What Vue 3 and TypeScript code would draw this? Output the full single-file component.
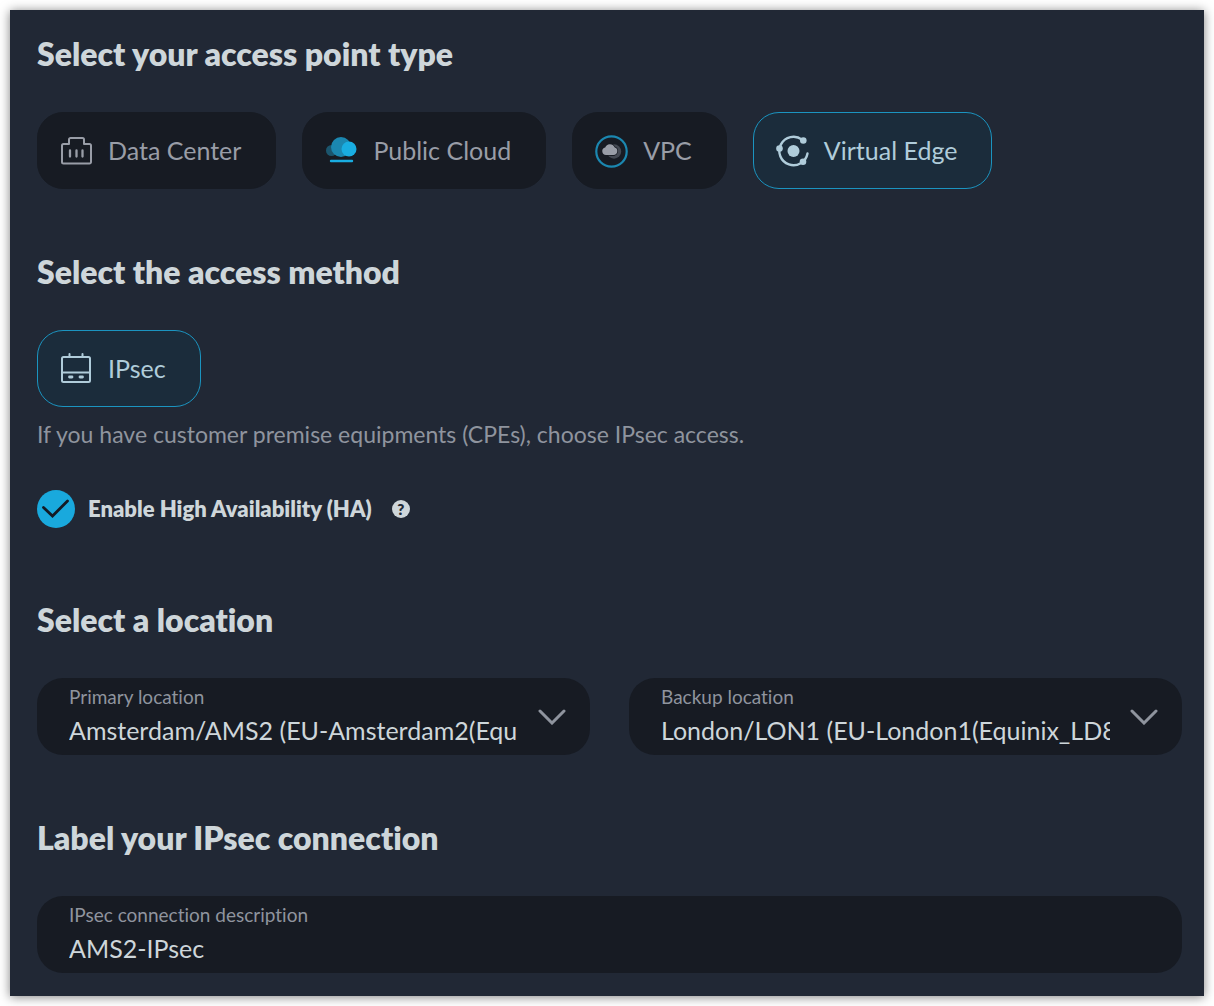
<script setup lang="ts">
import { ref } from 'vue'

type AccessIcon = 'data-center' | 'public-cloud' | 'vpc' | 'virtual-edge'

interface AccessPoint {
  id: AccessIcon
  label: string
}

const accessPoints: AccessPoint[] = [
  { id: 'data-center', label: 'Data Center' },
  { id: 'public-cloud', label: 'Public Cloud' },
  { id: 'vpc', label: 'VPC' },
  { id: 'virtual-edge', label: 'Virtual Edge' },
]

const accessPoint = ref<AccessIcon>('virtual-edge')
const highAvailability = ref(true)
const primary = ref('ams2')
const backup = ref('lon1')
const description = ref('AMS2-IPsec')
</script>

<template>
  <main class="panel">
    <section class="section">
      <h2>Select your access point type</h2>
      <div class="choices">
        <button
          v-for="point in accessPoints"
          :key="point.id"
          type="button"
          class="choice"
          :class="{ selected: accessPoint === point.id }"
          :aria-pressed="accessPoint === point.id"
          @click="accessPoint = point.id"
        >
          <svg v-if="point.id === 'data-center'" class="icon" viewBox="0 0 32 32" fill="none" stroke="currentColor" stroke-width="2" stroke-linecap="round" stroke-linejoin="round" aria-hidden="true">
            <path d="M9 9H3.500A1.500 1.500 0 0 0 2 10.500V27a1.500 1.500 0 0 0 1.500 1.500h26A1.500 1.500 0 0 0 31 27V10.500A1.500 1.500 0 0 0 29.500 9H24V4.500A1.500 1.500 0 0 0 22.500 3h-12A1.500 1.500 0 0 0 9 4.500z" />
            <path d="M10 15.500v6M16.500 15.500v6M22.500 15.500v6" stroke-width="2.300" />
          </svg>
          <svg v-else-if="point.id === 'public-cloud'" class="icon" viewBox="0 0 32 32" aria-hidden="true">
            <circle cx="6.500" cy="15.500" r="5.500" fill="#1b556d" />
            <circle cx="16" cy="12" r="10" fill="#1b87b0" />
            <circle cx="24" cy="14" r="7.500" fill="#19ade1" />
            <path d="M6 26h21" stroke="#19ade1" stroke-width="2.400" stroke-linecap="round" />
          </svg>
          <svg v-else-if="point.id === 'vpc'" class="icon" viewBox="0 0 32 32" aria-hidden="true">
            <circle cx="16.500" cy="16.500" r="15.200" fill="none" stroke="#1b87b0" stroke-width="2.200" />
            <circle cx="19" cy="16.500" r="7.200" fill="#444953" />
            <circle cx="17.500" cy="16.500" r="4.600" fill="#171b23" />
            <path d="M11 20a3.800 3.800 0 0 1-.8-7.500 5 5 0 0 1 9.300-.3A4 4 0 0 1 18.500 20z" fill="#999da7" stroke="#171b23" stroke-width="1.400" paint-order="stroke" />
          </svg>
          <svg v-else class="icon" viewBox="0 0 32 32" fill="none" stroke="currentColor" stroke-width="2.400" stroke-linecap="round" aria-hidden="true">
            <path d="M26 4.600A14.200 14.200 0 1 0 31.500 18.500" />
            <g fill="currentColor" stroke="none">
              <circle cx="17.500" cy="16" r="6" />
              <circle cx="27.300" cy="5.500" r="3.300" />
              <circle cx="3.500" cy="13.500" r="3.300" />
              <circle cx="27" cy="26.700" r="3.300" />
            </g>
          </svg>
          <span>{{ point.label }}</span>
        </button>
      </div>
    </section>

    <section class="section">
      <h2>Select the access method</h2>
      <div class="choices">
        <button type="button" class="choice selected" aria-pressed="true">
          <svg class="icon" viewBox="0 0 32 32" fill="none" stroke="currentColor" stroke-width="2" stroke-linecap="round" stroke-linejoin="round" aria-hidden="true">
            <rect x="2" y="4" width="28" height="25" rx="1.500" />
            <path d="M2 19.500h28M9.500 1V4M22.500 1V4" />
            <path d="M9.500 24h2.500M20 24h2.500" stroke-width="2.800" />
          </svg>
          <span>IPsec</span>
        </button>
      </div>
      <p class="hint">If you have customer premise equipments (CPEs), choose IPsec access.</p>
      <div class="availability">
        <label class="check">
          <input v-model="highAvailability" type="checkbox" />
          <svg v-if="highAvailability" viewBox="0 0 38 38" fill="none" stroke="#141a24" stroke-width="2.800" stroke-linecap="round" aria-hidden="true">
            <path d="M6.500 17.500L15.500 26L30.500 11" />
          </svg>
          <span>Enable High Availability (HA)</span>
        </label>
        <button type="button" class="help" aria-label="About high availability">?</button>
      </div>
    </section>

    <section class="section">
      <h2>Select a location</h2>
      <div class="locations">
        <div class="field">
          <label for="primary">Primary location</label>
          <select id="primary" v-model="primary">
            <option value="ams2">Amsterdam/AMS2 (EU-Amsterdam2(Equinix_AM5))</option>
          </select>
          <svg class="chevron" viewBox="0 0 28 16" fill="none" stroke="currentColor" stroke-width="3" stroke-linecap="round" aria-hidden="true">
            <path d="M2 2l12 12L26 2" />
          </svg>
        </div>
        <div class="field">
          <label for="backup">Backup location</label>
          <select id="backup" v-model="backup">
            <option value="lon1">London/LON1 (EU-London1(Equinix_LD8))</option>
          </select>
          <svg class="chevron" viewBox="0 0 28 16" fill="none" stroke="currentColor" stroke-width="3" stroke-linecap="round" aria-hidden="true">
            <path d="M2 2l12 12L26 2" />
          </svg>
        </div>
      </div>
    </section>

    <section class="section">
      <h2>Label your IPsec connection</h2>
      <div class="field">
        <label for="description">IPsec connection description</label>
        <input id="description" v-model="description" type="text" />
      </div>
    </section>
  </main>
</template>

<style>
body {
  background: #fff;
}
</style>

<style scoped>
.panel {
  display: flex;
  flex-direction: column;
  gap: 64px;
  margin: 10px;
  padding: 25px 22px 23px 27px;
  background: #212835;
  box-shadow: 0 1px 10px rgba(0, 0, 0, 0.5);
  color: #ced6da;
  font-family: Lato, 'Liberation Sans', sans-serif;
  font-variant-ligatures: none;
}

button,
input,
select {
  font-family: inherit;
}

h2 {
  margin: 0 0 39px;
  font-size: 32px;
  line-height: 38px;
  font-weight: 800;
}

.choices {
  display: flex;
  flex-wrap: wrap;
  gap: 26px;
}

.choice {
  display: flex;
  align-items: center;
  gap: 16px;
  box-sizing: border-box;
  height: 77px;
  padding: 0 34px 0 22px;
  border: 1px solid #171b23;
  border-radius: 26px;
  background: #171b23;
  color: #999da7;
  font-size: 25px;
  line-height: 32px;
}

.choice span {
  padding-bottom: 2px;
}

.choice.selected {
  border-color: #1b94c0;
  background: #1b2c3b;
  color: #b0ccda;
}

.icon {
  flex: none;
  width: 32px;
  height: 32px;
  overflow: visible;
}

.hint {
  margin: 15px 0 0;
  color: #8f949e;
  font-size: 23px;
  line-height: 24px;
}

.availability {
  display: flex;
  align-items: center;
  gap: 20px;
  margin: 44px 0 9px;
}

.check {
  display: grid;
  grid-template-columns: 38px auto;
  align-items: center;
  column-gap: 13px;
  font-size: 22px;
  line-height: 28px;
  font-weight: 800;
}

.check input {
  grid-area: 1 / 1;
  appearance: none;
  width: 38px;
  height: 38px;
  margin: 0;
  border-radius: 50%;
  background: #171b23;
}

.check input:checked {
  background: #19a9dd;
}

.check svg {
  grid-area: 1 / 1;
  width: 38px;
  height: 38px;
  pointer-events: none;
}

.help {
  width: 18px;
  height: 18px;
  padding: 0;
  border: 0;
  border-radius: 50%;
  background: #ced6da;
  color: #212835;
  font-size: 15px;
  line-height: 18px;
  font-weight: 800;
}

.locations {
  display: grid;
  grid-template-columns: 1fr 1fr;
  gap: 39px;
}

.field {
  display: grid;
  grid-template-columns: 1fr auto;
  grid-template-rows: 24px 40px;
  align-items: center;
  column-gap: 20px;
  box-sizing: border-box;
  height: 77px;
  padding: 7px 24px 6px 32px;
  border-radius: 26px;
  background: #171b23;
}

.field label {
  color: #8f949e;
  font-size: 19px;
  line-height: 24px;
}

.field select,
.field input {
  grid-area: 2 / 1;
  appearance: none;
  width: 100%;
  min-width: 0;
  height: 40px;
  margin: 0;
  padding: 2px 0 0;
  border: 0;
  border-radius: 0;
  outline: 0;
  background: transparent;
  color: #ced6da;
  font-size: 25px;
}

.chevron {
  grid-area: 1 / 2 / 3 / 3;
  width: 28px;
  height: 16px;
  color: #8f949e;
}
</style>
